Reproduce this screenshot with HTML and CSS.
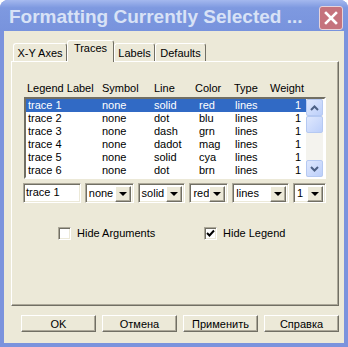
FILE: index.html
```html
<!DOCTYPE html>
<html lang="en">
<head>
    <meta charset="UTF-8">
    <title>Formatting Currently Selected Trace</title>
    <link rel="stylesheet" href="styles.css">
</head>
<body>

<div class="window">
    <div class="titlebar">
        <span class="title">Formatting Currently Selected ...</span>
        <div class="close">
            <svg width="14" height="14" viewBox="0 0 14 14"><path d="M2 2 L12 12 M12 2 L2 12" stroke="#fff" stroke-width="2.6" stroke-linecap="square"/></svg>
        </div>
    </div>

    <div class="client">
        <div class="tabs">
            <div class="tab tab-xy">X-Y Axes</div>
            <div class="tab tab-traces active">Traces</div>
            <div class="tab tab-labels">Labels</div>
            <div class="tab tab-defaults">Defaults</div>
        </div>

        <div class="panel">
            <div class="list-head">
                <span>Legend Label</span>
                <span>Symbol</span>
                <span>Line</span>
                <span>Color</span>
                <span>Type</span>
                <span>Weight</span>
            </div>

            <div class="list">
                <div class="rows">
                    <div class="row selected"><span>trace 1</span><span>none</span><span>solid</span><span>red</span><span>lines</span><span class="num">1</span></div>
                    <div class="row"><span>trace 2</span><span>none</span><span>dot</span><span>blu</span><span>lines</span><span class="num">1</span></div>
                    <div class="row"><span>trace 3</span><span>none</span><span>dash</span><span>grn</span><span>lines</span><span class="num">1</span></div>
                    <div class="row"><span>trace 4</span><span>none</span><span>dadot</span><span>mag</span><span>lines</span><span class="num">1</span></div>
                    <div class="row"><span>trace 5</span><span>none</span><span>solid</span><span>cya</span><span>lines</span><span class="num">1</span></div>
                    <div class="row"><span>trace 6</span><span>none</span><span>dot</span><span>brn</span><span>lines</span><span class="num">1</span></div>
                </div>
                <div class="scrollbar">
                    <div class="sb-btn">
                        <svg width="9" height="6" viewBox="0 0 9 6"><path d="M1 5 L4.5 1.5 L8 5" fill="none" stroke="#4d6185" stroke-width="2"/></svg>
                    </div>
                    <div class="sb-thumb"></div>
                    <div class="sb-track"></div>
                    <div class="sb-btn">
                        <svg width="9" height="6" viewBox="0 0 9 6"><path d="M1 1 L4.5 4.5 L8 1" fill="none" stroke="#4d6185" stroke-width="2"/></svg>
                    </div>
                </div>
            </div>

            <div class="editors">
                <div class="field edit-label">trace 1</div>
                <div class="field combo combo-symbol"><span>none</span><div class="drop"></div></div>
                <div class="field combo combo-line"><span>solid</span><div class="drop"></div></div>
                <div class="field combo combo-color"><span>red</span><div class="drop"></div></div>
                <div class="field combo combo-type"><span>lines</span><div class="drop"></div></div>
                <div class="field combo combo-weight"><span>1</span><div class="drop"></div></div>
            </div>

            <div class="checks">
                <label class="check check-args"><span class="box"></span>Hide Arguments</label>
                <label class="check check-legend">
                    <span class="box">
                        <svg width="9" height="9" viewBox="0 0 9 9"><path d="M1 4 L3.5 6.5 L8 1.5" fill="none" stroke="#000" stroke-width="2"/></svg>
                    </span>Hide Legend
                </label>
            </div>
        </div>

        <div class="buttons">
            <button>OK</button>
            <button>Отмена</button>
            <button>Применить</button>
            <button>Справка</button>
        </div>
    </div>
</div>

</body>
</html>
```

FILE: styles.css
```css
body {
    margin: 0;
    background: #fff;
    font-family: "Liberation Sans", Arial, sans-serif;
    font-size: 11px;
    color: #000;
}

.window {
    width: 348px;
    height: 347px;
    display: flex;
    flex-direction: column;
    background: #7b93dd; /* window frame */
    border-radius: 8px 8px 0 0;
}

.titlebar {
    height: 31px;
    display: flex;
    align-items: flex-start;
    padding: 0 5px 0 9px;
    background: linear-gradient(#a4b8ee, #7e99e0 25%, #7893dd);
    border-radius: 8px 8px 0 0;
}
.title {
    flex: 1;
    margin-top: 6px;
    color: #d8e2f6;
    font-size: 19px;
    font-weight: bold;
    white-space: nowrap;
    overflow: hidden;
}
.close {
    width: 22px;
    height: 22px;
    margin-top: 6px;
    background: #c5737d;
    border: 1px solid #e6d3da;
    border-radius: 3px;
    display: flex;
    align-items: center;
    justify-content: center;
}

.client {
    flex: 1;
    margin: 0 4px 4px;
    padding: 10px 5px 0 7px;
    background: #ece9d8;
}

/* tabs */
.tabs {
    display: flex;
    align-items: flex-end;
    height: 20px;
    margin-left: 2px;
    position: relative;
    z-index: 1;
}
.tab {
    height: 17px;
    line-height: 18px;
    text-align: center;
    border: 1px solid;
    border-color: #fff #716f64 transparent #fff;
    border-bottom: none;
    border-radius: 3px 3px 0 0;
    background: #ece9d8;
    box-sizing: content-box;
}
.tab-xy { width: 52px; }
.tab-traces { width: 45px; }
.tab-labels { width: 39px; }
.tab-defaults { width: 49px; }
.tab.active {
    height: 21px;
    line-height: 15px;
    margin-bottom: -1px;
}

.panel {
    height: 223px;
    padding: 20px 12px 0 12px;
    border: 1px solid;
    border-color: #fff #716f64 #716f64 #fff;
    box-shadow: inset -1px -1px 0 #aca899;
}

/* list view */
.list-head {
    display: grid;
    grid-template-columns: 75px 52px 41px 39px 36px 1fr;
    height: 15px;
    padding-left: 3px;
}
.list {
    display: flex;
    width: 298px;
    height: 78px;
    margin-top: 0;
    border: 2px solid;
    border-color: #716f64 #fff #fff #716f64;
    box-shadow: 0 0 0 0 transparent;
    background: #fff;
}
.rows {
    width: 280px;
}
.row {
    display: grid;
    grid-template-columns: 74px 52px 45px 36px 37px 36px;
    height: 13px;
    line-height: 13px;
}
.row span {
    padding-left: 2px;
}
.row .num {
    text-align: right;
    padding: 0 5px 0 0;
}
.row.selected {
    background: #316ac5;
    color: #fff;
}

.scrollbar {
    width: 17px;
    display: flex;
    flex-direction: column;
    background: #f4f3ee;
}
.sb-btn, .sb-thumb {
    height: 15px;
    border: 1px solid #b5c9f2;
    border-radius: 2px;
    background: linear-gradient(135deg, #dfe8fd, #bccffa);
    display: flex;
    align-items: center;
    justify-content: center;
}
.sb-thumb {
    height: 15px;
}
.sb-track {
    flex: 1;
}

/* editor row */
.editors {
    display: flex;
    gap: 4px;
    margin-top: 4px;
    margin-left: -1px;
}
.field {
    height: 20px;
    box-sizing: border-box;
    background: #fff;
    border: 1px solid;
    border-color: #aca899 #fff #fff #aca899;
    box-shadow: inset 1px 1px 0 #716f64, inset -1px -1px 0 #ece9d8;
    line-height: 16px;
    padding-left: 2px;
}
.edit-label { width: 58px; }
.combo {
    display: flex;
    justify-content: space-between;
    padding: 2px 2px 2px 3px;
    line-height: 15px;
}
.combo-symbol { width: 49px; }
.combo-line { width: 48px; }
.combo-color { width: 39px; }
.combo-type { width: 57px; }
.combo-weight { width: 33px; }
.drop {
    width: 16px;
    height: 16px;
    box-sizing: border-box;
    background: #ece9d8;
    border: 1px solid;
    border-color: #fff #716f64 #716f64 #fff;
    box-shadow: inset -1px -1px 0 #aca899;
    position: relative;
}
.drop::after {
    content: "";
    position: absolute;
    left: 3px;
    top: 5px;
    border-style: solid;
    border-width: 4px 4px 0 4px;
    border-color: #000 transparent transparent transparent;
}

/* check boxes */
.checks {
    display: flex;
    margin-top: 24px;
    margin-left: 34px;
    height: 13px;
}
.check {
    display: flex;
    align-items: center;
    gap: 6px;
    line-height: 13px;
}
.check-args {
    width: 146px;
}
.box {
    width: 13px;
    height: 13px;
    box-sizing: border-box;
    background: #fff;
    border: 1px solid;
    border-color: #aca899 #fff #fff #aca899;
    box-shadow: inset 1px 1px 0 #716f64, inset -1px -1px 0 #ece9d8;
    display: flex;
    align-items: center;
    justify-content: center;
}

/* dialog buttons */
.buttons {
    display: flex;
    gap: 6px;
    margin-top: 9px;
    padding-left: 10px;
}
.buttons button {
    width: 75px;
    height: 17px;
    padding: 0;
    font-family: "Liberation Sans", Arial, sans-serif;
    font-size: 11px;
    background: #ece9d8;
    border: 1px solid;
    border-color: #fff #716f64 #716f64 #fff;
    box-shadow: inset -1px -1px 0 #aca899;
}
```
